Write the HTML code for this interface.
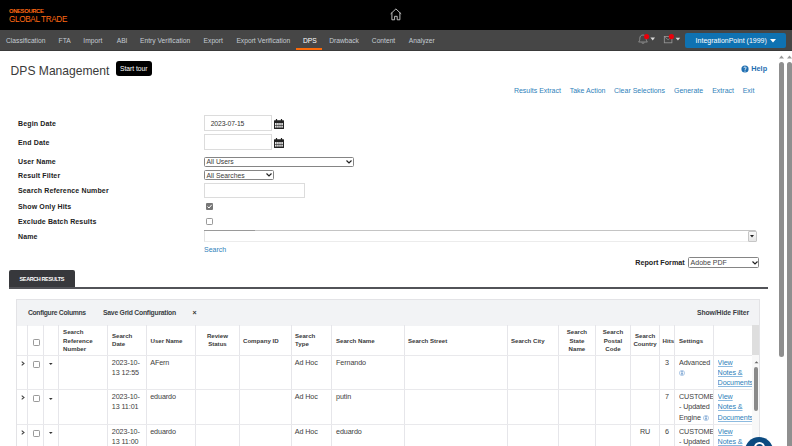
<!DOCTYPE html>
<html><head><meta charset="utf-8">
<style>
*{box-sizing:border-box;margin:0;padding:0}
html,body{width:792px;height:446px;overflow:hidden;background:#fff;font-family:"Liberation Sans",sans-serif;color:#333}
.a{position:absolute;white-space:nowrap}
#hdr{position:absolute;left:0;top:0;width:792px;height:30px;background:#000}
#nav{position:absolute;left:0;top:30px;width:792px;height:20.5px;background:#464646;border-bottom:1px solid #3a3a3a}
.nv{position:absolute;top:31px;height:20px;line-height:20px;font-size:6.7px;color:#c5ccd3}
.lk{color:#2f7fba;font-size:7px}
.lbl{font-weight:bold;font-size:7px;color:#222;left:18px;letter-spacing:.14px}
.th{font-weight:bold;font-size:6.1px;color:#3a3a3a;line-height:8.5px}
.td{font-size:7.2px;color:#3d3d3d;line-height:10.3px;letter-spacing:-0.1px}
.vl{position:absolute;width:1px;background:#e6e6ea}
.hl{position:absolute;height:1px;background:#e9e9ec}
.cb{position:absolute;width:7px;height:7px;border:1px solid #9a9a9a;border-radius:1.2px;background:#fff}
.ul{color:#2f7fba;text-decoration:underline;text-decoration-color:#8dbbe0;text-underline-offset:0.55px}
</style></head><body>
<div id="hdr"></div>
<div class="a" style="left:9px;top:8.2px;font-size:5.9px;font-weight:bold;color:#ff6a13;line-height:6px;letter-spacing:-0.38px">ONESOURCE</div>
<div class="a" style="left:9px;top:15.8px;font-size:8.2px;color:#ff6a13;line-height:8.5px;letter-spacing:-0.36px">GLOBAL TRADE</div>
<svg class="a" style="left:389px;top:7px" width="14" height="15" viewBox="0 0 14 15"><path d="M1.6 6.9 L6.9 1.9 L12.2 6.9 M2.9 5.6 V12.8 H5.6 V9.3 H8.2 V12.8 H10.9 V5.6" fill="none" stroke="#cfcfcf" stroke-width="0.9" stroke-linejoin="round"/></svg>

<div id="nav"></div>
<div class="nv" style="left:6px">Classification</div>
<div class="nv" style="left:58.6px">FTA</div>
<div class="nv" style="left:83.3px">Import</div>
<div class="nv" style="left:116.7px">ABI</div>
<div class="nv" style="left:140px">Entry Verification</div>
<div class="nv" style="left:203.6px">Export</div>
<div class="nv" style="left:236.4px">Export Verification</div>
<div class="nv" style="left:303px;color:#fff">DPS</div>
<div class="a" style="left:296.4px;top:48px;width:26px;height:2px;background:#fa6a0a"></div>
<div class="nv" style="left:329.2px">Drawback</div>
<div class="nv" style="left:371.8px">Content</div>
<div class="nv" style="left:408.8px">Analyzer</div>

<!-- bell -->
<svg class="a" style="left:636px;top:33px" width="22" height="12" viewBox="0 0 22 12">
<path d="M2.6 9 C3.6 8 3.8 6.8 3.8 5.2 C3.8 3.3 5.2 2 7 2 C8.8 2 10.2 3.3 10.2 5.2 C10.2 6.8 10.4 8 11.4 9 Z M5.6 9.8 Q7 10.9 8.4 9.8" fill="none" stroke="#9a9a9a" stroke-width="0.8" stroke-linejoin="round"/>
<circle cx="10.6" cy="3.6" r="2.6" fill="#e8000b"/>
<path d="M14.4 4.6 H19 L16.7 7.4 Z" fill="#d8d8d8"/>
</svg>
<svg class="a" style="left:662px;top:33px" width="22" height="12" viewBox="0 0 22 12">
<rect x="2.3" y="3.4" width="7.6" height="6.4" fill="none" stroke="#9a9a9a" stroke-width="0.8"/>
<path d="M2.3 3.6 L6.1 6.8 L9.9 3.6" fill="none" stroke="#9a9a9a" stroke-width="0.6"/>
<circle cx="9.4" cy="3.6" r="2.6" fill="#e8000b"/>
<path d="M13.6 4.8 H18.2 L15.9 7.4 Z" fill="#d8d8d8"/>
</svg>
<div class="a" style="left:685px;top:33px;width:101px;height:15px;background:#0f72b2;border-radius:2px"></div>
<div class="a" style="left:695.6px;top:33px;line-height:15px;font-size:7px;color:#fff">IntegrationPoint (1999)</div>
<svg class="a" style="left:770px;top:39px" width="6" height="4" viewBox="0 0 6 4"><path d="M0 0 H6 L3 3.5Z" fill="#fff"/></svg>

<!-- title -->
<div class="a" style="left:10.6px;top:62.7px;font-size:12.1px;line-height:16px;color:#3a3a3a">DPS Management</div>
<div class="a" style="left:116px;top:61px;width:36px;height:15px;background:#000;border-radius:3px"></div>
<div class="a" style="left:120px;top:61.1px;line-height:15px;font-size:6.7px;color:#fff">Start tour</div>

<!-- help -->
<svg class="a" style="left:741px;top:65px" width="8" height="8" viewBox="0 0 8 8"><circle cx="4" cy="4" r="3.6" fill="#1f6fb2"/><path d="M2.9 3.1 C2.9 1.6 5.1 1.6 5.1 3 C5.1 3.9 4 3.9 4 4.9" fill="none" stroke="#fff" stroke-width="0.9"/><circle cx="4" cy="6.1" r="0.55" fill="#fff"/></svg>
<div class="a" style="left:751.3px;top:64.2px;font-size:7.3px;line-height:9px;font-weight:bold;color:#1f6fb2">Help</div>

<div class="a lk" style="left:513.9px;top:86px;line-height:10px">Results Extract</div>
<div class="a lk" style="left:569.7px;top:86px;line-height:10px">Take Action</div>
<div class="a lk" style="left:614px;top:86px;line-height:10px">Clear Selections</div>
<div class="a lk" style="left:674px;top:86px;line-height:10px">Generate</div>
<div class="a lk" style="left:712.2px;top:86px;line-height:10px">Extract</div>
<div class="a lk" style="left:742.7px;top:86px;line-height:10px">Exit</div>

<!-- scrollbars -->
<div class="a" style="left:777px;top:51.5px;width:15px;height:395px;background:#fff"></div>
<div class="a" style="left:779px;top:62px;width:5px;height:295px;background:#8f8f8f;border-radius:2.5px"></div>
<div class="a" style="left:787px;top:62px;width:5px;height:384px;background:#8f8f8f;border-radius:2.5px 2.5px 0 0"></div>
<svg class="a" style="left:779px;top:55px" width="13" height="4" viewBox="0 0 13 4"><path d="M0 3.5 L2.5 0.5 L5 3.5Z M8 3.5 L10.5 0.5 L13 3.5Z" fill="#999"/></svg>

<!-- form -->
<div class="a lbl" style="top:118.6px;line-height:10px">Begin Date</div>
<div class="a lbl" style="top:137.6px;line-height:10px">End Date</div>
<div class="a lbl" style="top:156.6px;line-height:10px">User Name</div>
<div class="a lbl" style="top:170.5px;line-height:10px">Result Filter</div>
<div class="a lbl" style="top:185.7px;line-height:10px">Search Reference Number</div>
<div class="a lbl" style="top:201.9px;line-height:10px">Show Only Hits</div>
<div class="a lbl" style="top:217.2px;line-height:10px">Exclude Batch Results</div>
<div class="a lbl" style="top:232px;line-height:10px">Name</div>

<div class="a" style="left:204px;top:115px;width:68px;height:15.7px;border:1px solid #dcdcdc"></div>
<div class="a" style="left:210.7px;top:115.6px;line-height:15px;font-size:6.8px;color:#333;letter-spacing:-0.12px">2023-07-15</div>
<div class="a" style="left:204px;top:134px;width:68px;height:15.6px;border:1px solid #dcdcdc"></div>
<svg class="a" style="left:274px;top:119px" width="10" height="10" viewBox="0 0 10 10"><rect x="0" y="1.2" width="10" height="8.8" rx="0.5" fill="#222"/><rect x="1" y="4" width="1.6" height="2" fill="#e2e2e2"/><rect x="3.1" y="4" width="1.6" height="2" fill="#e2e2e2"/><rect x="5.2" y="4" width="1.6" height="2" fill="#e2e2e2"/><rect x="7.3" y="4" width="1.6" height="2" fill="#e2e2e2"/><rect x="1" y="6.6" width="1.6" height="2" fill="#e2e2e2"/><rect x="3.1" y="6.6" width="1.6" height="2" fill="#e2e2e2"/><rect x="5.2" y="6.6" width="1.6" height="2" fill="#e2e2e2"/><rect x="7.3" y="6.6" width="1.6" height="2" fill="#e2e2e2"/><path d="M2.5 0 V2 M7.5 0 V2" stroke="#222" stroke-width="1.2"/></svg>
<svg class="a" style="left:274px;top:138px" width="10" height="10" viewBox="0 0 10 10"><rect x="0" y="1.2" width="10" height="8.8" rx="0.5" fill="#222"/><rect x="1" y="4" width="1.6" height="2" fill="#e2e2e2"/><rect x="3.1" y="4" width="1.6" height="2" fill="#e2e2e2"/><rect x="5.2" y="4" width="1.6" height="2" fill="#e2e2e2"/><rect x="7.3" y="4" width="1.6" height="2" fill="#e2e2e2"/><rect x="1" y="6.6" width="1.6" height="2" fill="#e2e2e2"/><rect x="3.1" y="6.6" width="1.6" height="2" fill="#e2e2e2"/><rect x="5.2" y="6.6" width="1.6" height="2" fill="#e2e2e2"/><rect x="7.3" y="6.6" width="1.6" height="2" fill="#e2e2e2"/><path d="M2.5 0 V2 M7.5 0 V2" stroke="#222" stroke-width="1.2"/></svg>

<div class="a" style="left:204px;top:157px;width:149.5px;height:9.5px;border:1px solid #858585;border-radius:1.5px"></div>
<div class="a" style="left:206.5px;top:157px;line-height:9.5px;font-size:6.8px;color:#3a3a3a">All Users</div>
<svg class="a" style="left:346px;top:160px" width="6" height="4" viewBox="0 0 6 4"><path d="M0.5 0.5 L3 3 L5.5 0.5" fill="none" stroke="#222" stroke-width="1.2"/></svg>
<div class="a" style="left:204px;top:170.2px;width:69.5px;height:9.7px;border:1px solid #858585;border-radius:1.5px"></div>
<div class="a" style="left:206.5px;top:171px;line-height:9.5px;font-size:6.8px;color:#3a3a3a">All Searches</div>
<svg class="a" style="left:266px;top:172.9px" width="6" height="4" viewBox="0 0 6 4"><path d="M0.5 0.5 L3 3 L5.5 0.5" fill="none" stroke="#222" stroke-width="1.2"/></svg>
<div class="a" style="left:204px;top:183px;width:101px;height:14.6px;border:1px solid #dcdcdc"></div>
<div class="a" style="left:206px;top:203px;width:7px;height:7px;background:#777;border-radius:1px"></div>
<svg class="a" style="left:206px;top:203px" width="7" height="7" viewBox="0 0 7 7"><path d="M1.5 3.5 L3 5 L5.7 1.8" fill="none" stroke="#fff" stroke-width="1"/></svg>
<div class="cb" style="left:206px;top:218px"></div>
<div class="a" style="left:204px;top:230.3px;width:552px;height:11.5px;border:1px solid #e2e2e2;border-top-color:#c4c4c4;border-bottom-color:#ececec"></div><div class="a" style="left:204px;top:230.3px;width:51px;height:1px;background:#9a9a9a"></div>
<div class="a" style="left:747.5px;top:230.5px;width:9px;height:11.3px;background:linear-gradient(#fafafa,#e6e6e6);border:1px solid #c6c6c6;border-radius:1px"></div>
<svg class="a" style="left:749.6px;top:235px" width="4" height="3" viewBox="0 0 4 3"><path d="M0 0 H4 L2 2.5Z" fill="#222"/></svg>
<div class="a lk" style="left:204px;top:244.5px;line-height:10px;font-size:7px">Search</div>

<div class="a" style="left:635.2px;top:258px;font-weight:bold;font-size:7.2px;line-height:10px;color:#222">Report Format</div>
<div class="a" style="left:688.2px;top:257px;width:70.5px;height:10.5px;border:1px solid #858585;border-radius:1.5px"></div>
<div class="a" style="left:690.6px;top:257.5px;line-height:10px;font-size:7px;color:#444">Adobe PDF</div>
<svg class="a" style="left:751.5px;top:261px" width="6" height="4" viewBox="0 0 6 4"><path d="M0.5 0.5 L3 3 L5.5 0.5" fill="none" stroke="#222" stroke-width="1.2"/></svg>

<!-- tab -->
<div class="a" style="left:9px;top:269.5px;width:65.7px;height:18px;background:#37383c;border-radius:2px 2px 0 0"></div>
<div class="a" style="left:19.6px;top:272.5px;line-height:12px;font-size:5.5px;letter-spacing:-0.4px;font-weight:bold;color:#fff">SEARCH RESULTS</div>
<div class="a" style="left:9px;top:287px;width:759px;height:2px;background:#525358"></div>

<!-- table -->
<div class="a" style="left:16px;top:299px;width:744px;height:147px;border:1px solid #e3e3e6;border-bottom:none;background:#fff"></div>
<div class="a" style="left:17px;top:300px;width:742px;height:25.6px;background:#f2f3f5"></div>
<div class="a" style="left:27.9px;top:308px;font-weight:bold;font-size:6.8px;letter-spacing:-0.3px;line-height:10px;color:#3a3e44">Configure Columns</div>
<div class="a" style="left:103px;top:308px;font-weight:bold;font-size:6.8px;letter-spacing:-0.23px;line-height:10px;color:#3a3e44">Save Grid Configuration</div>
<div class="a" style="left:192.5px;top:308px;font-weight:bold;font-size:7px;line-height:10px;color:#333">×</div>
<div class="a" style="left:697px;top:308px;font-weight:bold;font-size:6.8px;letter-spacing:-0.08px;line-height:10px;color:#3a3e44">Show/Hide Filter</div>

<div id="grid">
<div class="a" style="left:752px;top:325px;width:7px;height:30px;background:#dedede"></div>
<div class="vl" style="left:27px;top:325px;height:121px"></div>
<div class="vl" style="left:43px;top:325px;height:121px"></div>
<div class="vl" style="left:58px;top:325px;height:121px"></div>
<div class="vl" style="left:107px;top:325px;height:121px"></div>
<div class="vl" style="left:146px;top:325px;height:121px"></div>
<div class="vl" style="left:195px;top:325px;height:121px"></div>
<div class="vl" style="left:239px;top:325px;height:121px"></div>
<div class="vl" style="left:291px;top:325px;height:121px"></div>
<div class="vl" style="left:331px;top:325px;height:121px"></div>
<div class="vl" style="left:404px;top:325px;height:121px"></div>
<div class="vl" style="left:507px;top:325px;height:121px"></div>
<div class="vl" style="left:558px;top:325px;height:121px"></div>
<div class="vl" style="left:595px;top:325px;height:121px"></div>
<div class="vl" style="left:630px;top:325px;height:121px"></div>
<div class="vl" style="left:659px;top:325px;height:121px"></div>
<div class="vl" style="left:674px;top:325px;height:121px"></div>
<div class="vl" style="left:713px;top:325px;height:121px"></div>
<div class="hl" style="left:17px;top:355px;width:735px"></div>
<div class="hl" style="left:17px;top:389px;width:735px"></div>
<div class="hl" style="left:17px;top:424px;width:735px"></div>
<div class="a th" style="left:63.1px;top:328.1px">Search<br>Reference<br>Number</div>
<div class="a th" style="left:112.0px;top:331.9px">Search<br>Date</div>
<div class="a th" style="left:150.5px;top:336.6px">User Name</div>
<div class="a th" style="left:195.5px;top:331.9px;width:43.9px;text-align:center">Review<br>Status</div>
<div class="a th" style="left:243.0px;top:336.6px">Company ID</div>
<div class="a th" style="left:295.0px;top:331.9px">Search<br>Type</div>
<div class="a th" style="left:336.0px;top:336.6px">Search Name</div>
<div class="a th" style="left:408.0px;top:336.6px">Search Street</div>
<div class="a th" style="left:511.0px;top:336.6px">Search City</div>
<div class="a th" style="left:558.5px;top:328.1px;width:36.8px;text-align:center">Search<br>State<br>Name</div>
<div class="a th" style="left:595.3px;top:328.1px;width:35.3px;text-align:center">Search<br>Postal<br>Code</div>
<div class="a th" style="left:630.6px;top:331.9px;width:29.0px;text-align:center">Search<br>Country</div>
<div class="a th" style="left:662.6px;top:336.6px">Hits</div>
<div class="a th" style="left:679.0px;top:336.6px">Settings</div>
<div class="cb" style="left:33px;top:338.7px"></div>
<svg class="a" style="left:20.8px;top:360.5px" width="4" height="5" viewBox="0 0 4 5"><path d="M0.7 0.6 L3 2.5 L0.7 4.4" fill="none" stroke="#444" stroke-width="1.1"/></svg>
<div class="cb" style="left:33px;top:360.6px"></div>
<svg class="a" style="left:48.8px;top:363.2px" width="4" height="3" viewBox="0 0 4 3"><path d="M0 0 H3.6 L1.8 2Z" fill="#333"/></svg>
<div class="a td" style="left:111.8px;top:357.7px">2023-10-<br>13 12:55</div>
<div class="a td" style="left:150.2px;top:357.7px">AFern</div>
<div class="a td" style="left:294.7px;top:357.7px">Ad Hoc</div>
<div class="a td" style="left:336px;top:357.7px">Fernando</div>
<div class="a td" style="left:659.6px;width:14.6px;text-align:center;top:357.7px">3</div>
<div class="a td" style="left:679px;top:357.7px;width:34px;overflow:hidden">Advanced<br><svg width="6" height="6" viewBox="0 0 6 6" style="vertical-align:-1px"><circle cx="3" cy="3" r="2.6" fill="#f4f8fc" stroke="#8ab0da" stroke-width="0.6"/><path d="M3 2.6 V4.7" stroke="#2d6cb5" stroke-width="1"/><circle cx="3" cy="1.6" r="0.55" fill="#2d6cb5"/></svg></div>
<div class="a td ul" style="left:717.6px;top:357.7px;width:34.4px;overflow:hidden">View<br>Notes &amp;<br>Documents</div>
<svg class="a" style="left:20.8px;top:395.0px" width="4" height="5" viewBox="0 0 4 5"><path d="M0.7 0.6 L3 2.5 L0.7 4.4" fill="none" stroke="#444" stroke-width="1.1"/></svg>
<div class="cb" style="left:33px;top:395.1px"></div>
<svg class="a" style="left:48.8px;top:397.7px" width="4" height="3" viewBox="0 0 4 3"><path d="M0 0 H3.6 L1.8 2Z" fill="#333"/></svg>
<div class="a td" style="left:111.8px;top:392.2px">2023-10-<br>13 11:01</div>
<div class="a td" style="left:150.2px;top:392.2px">eduardo</div>
<div class="a td" style="left:294.7px;top:392.2px">Ad Hoc</div>
<div class="a td" style="left:336px;top:392.2px">putin</div>
<div class="a td" style="left:659.6px;width:14.6px;text-align:center;top:392.2px">7</div>
<div class="a td" style="left:679px;top:392.2px;width:34px;overflow:hidden">CUSTOME<br>- Updated<br>Engine <svg width="6" height="6" viewBox="0 0 6 6" style="vertical-align:-1px"><circle cx="3" cy="3" r="2.6" fill="#f4f8fc" stroke="#8ab0da" stroke-width="0.6"/><path d="M3 2.6 V4.7" stroke="#2d6cb5" stroke-width="1"/><circle cx="3" cy="1.6" r="0.55" fill="#2d6cb5"/></svg></div>
<div class="a td ul" style="left:717.6px;top:392.2px;width:34.4px;overflow:hidden">View<br>Notes &amp;<br>Documents</div>
<svg class="a" style="left:20.8px;top:429.5px" width="4" height="5" viewBox="0 0 4 5"><path d="M0.7 0.6 L3 2.5 L0.7 4.4" fill="none" stroke="#444" stroke-width="1.1"/></svg>
<div class="cb" style="left:33px;top:429.6px"></div>
<svg class="a" style="left:48.8px;top:432.2px" width="4" height="3" viewBox="0 0 4 3"><path d="M0 0 H3.6 L1.8 2Z" fill="#333"/></svg>
<div class="a td" style="left:111.8px;top:426.7px">2023-10-<br>13 11:00</div>
<div class="a td" style="left:150.2px;top:426.7px">eduardo</div>
<div class="a td" style="left:294.7px;top:426.7px">Ad Hoc</div>
<div class="a td" style="left:336px;top:426.7px">eduardo</div>
<div class="a td" style="left:630.6px;width:29.0px;text-align:center;top:426.7px">RU</div>
<div class="a td" style="left:659.6px;width:14.6px;text-align:center;top:426.7px">6</div>
<div class="a td" style="left:679px;top:426.7px;width:34px;overflow:hidden">CUSTOME<br>- Updated<br>Engine <svg width="6" height="6" viewBox="0 0 6 6" style="vertical-align:-1px"><circle cx="3" cy="3" r="2.6" fill="#f4f8fc" stroke="#8ab0da" stroke-width="0.6"/><path d="M3 2.6 V4.7" stroke="#2d6cb5" stroke-width="1"/><circle cx="3" cy="1.6" r="0.55" fill="#2d6cb5"/></svg></div>
<div class="a td ul" style="left:717.6px;top:426.7px;width:34.4px;overflow:hidden">View<br>Notes &amp;<br>Documents</div>
<div class="a" style="left:752px;top:355px;width:7px;height:91px;background:#f8f8f8"></div>
<svg class="a" style="left:753.8px;top:360.5px" width="5" height="3" viewBox="0 0 5 3"><path d="M0.5 2.3 L2.5 0.3 L4.5 2.3Z" fill="#666"/></svg>
<div class="a" style="left:754px;top:367px;width:4px;height:43.5px;background:#8a8a8a;border-radius:2px"></div>
<div class="a" style="left:744.5px;top:436.5px;width:28px;height:28px;border-radius:50%;background:#0b4a80"></div>
<div class="a" style="left:753.5px;top:442px;width:11px;height:11px;border-radius:50%;border:2px solid #fff"></div>
</div>
</body></html>
